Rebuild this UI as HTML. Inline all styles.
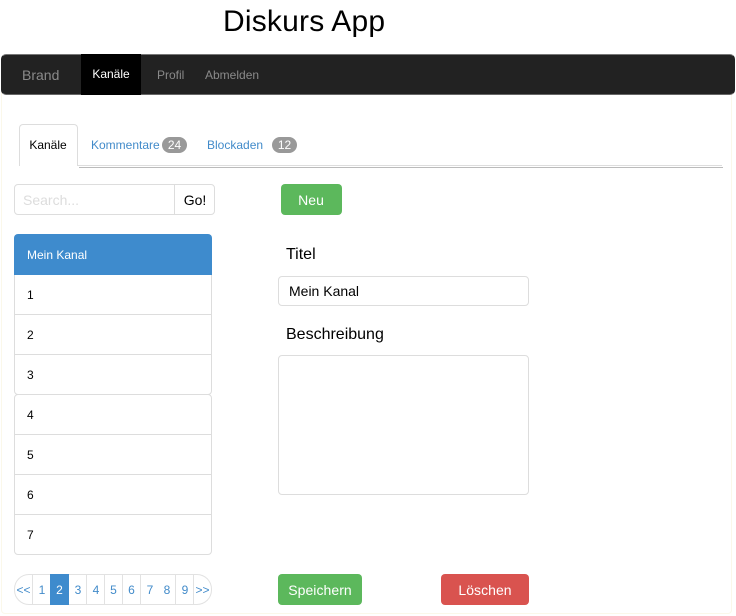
<!DOCTYPE html>
<html><head><meta charset="utf-8"><title>Diskurs App</title>
<style>
*{box-sizing:border-box}
html,body{margin:0;padding:0;width:736px;height:616px;overflow:hidden;background:#fff;font-family:"Liberation Sans",sans-serif;color:#000}
.a{position:absolute;white-space:nowrap}
.panel{left:1px;top:90px;width:731px;height:524px;border:1px solid #fbf8ea;border-radius:4px}
.nav{left:1px;top:54px;width:734px;height:41px;background:#222;border:1px solid #222;border-top-color:#777;border-bottom-color:#666;border-radius:5px}
.btn{display:block;text-align:center;color:#fff;font-size:14px;border-radius:4px;letter-spacing:.05px}
.item{left:14px;width:198px;height:41px;border:1px solid #ddd;background:#fff;font-size:12px;line-height:41px;padding-left:12px}
.pg{top:574px;height:31px;border:1px solid #e2e2e2;border-left:0;background:#fff;color:#428bca;font-size:12px;line-height:31px;text-align:center;padding-left:1px}
.badge{background:#999;color:#fff;border-radius:10px;font-size:12px;line-height:16px;height:16px;text-align:center}
.tab{color:#428bca;font-size:12px;line-height:16px}
.lbl{font-size:16px;line-height:20px}
</style></head>
<body>
<div class="a" style="left:223px;top:5px;font-size:30px;line-height:34px;letter-spacing:.2px">Diskurs App</div>
<div class="a panel"></div>
<div class="a nav"></div>
<div class="a" style="left:22px;top:67px;font-size:14px;line-height:16px;color:#8a8a8a">Brand</div>
<div class="a" style="left:81px;top:54px;width:60px;height:41px;background:#000;color:#fff;font-size:12px;line-height:41px;text-align:center">Kanäle</div>
<div class="a" style="left:157px;top:67px;font-size:12px;line-height:16px;color:#8a8a8a">Profil</div>
<div class="a" style="left:205px;top:67px;font-size:12px;line-height:16px;color:#8a8a8a">Abmelden</div>

<div class="a" style="left:78px;top:165px;width:644px;height:1px;background:#ddd"></div>
<div class="a" style="left:79px;top:167px;width:644px;height:1px;background:#bbb"></div>
<div class="a" style="left:19px;top:124px;width:59px;height:42px;background:#fff;border:1px solid #ddd;border-bottom:0;border-radius:4px 4px 0 0;font-size:12px;line-height:40px;text-align:center;padding-right:1px">Kanäle</div>
<div class="a tab" style="left:91px;top:137px">Kommentare</div>
<div class="a badge" style="left:162px;top:137px;width:25px">24</div>
<div class="a tab" style="left:207px;top:137px">Blockaden</div>
<div class="a badge" style="left:272px;top:137px;width:25px">12</div>

<div class="a" style="left:14px;top:184px;width:161px;height:31px;border:1px solid #ddd;border-radius:4px 0 0 4px;font-size:14px;line-height:31px;padding-left:8px;color:#ddd;background:#fff">Search...</div>
<div class="a" style="left:174px;top:184px;width:41px;height:31px;border:1px solid #ddd;border-radius:0 4px 4px 0;font-size:14px;line-height:31px;text-align:center;background:#fff;padding-left:1px">Go!</div>
<div class="a btn" style="left:281px;top:184px;width:61px;height:31px;line-height:33px;background:#5cb85c;padding-right:1px">Neu</div>

<div class="a item" style="top:354px;height:41px;border-radius:0 0 4px 4px">3</div>
<div class="a item" style="top:314px">2</div>
<div class="a item" style="top:274px">1</div>
<div class="a" style="left:14px;top:234px;width:198px;height:41px;background:#3e8bcd;border-radius:4px 4px 0 0;color:#fff;font-size:12px;line-height:43px;padding-left:13px">Mein Kanal</div>

<div class="a item" style="top:394px;border-radius:4px 4px 0 0">4</div>
<div class="a item" style="top:434px">5</div>
<div class="a item" style="top:474px">6</div>
<div class="a item" style="top:514px;border-radius:0 0 4px 4px">7</div>

<div class="a pg" style="left:14px;width:19px;border-left:1px solid #e2e2e2;border-radius:15px 0 0 15px;padding-left:0">&lt;&lt;</div>
<div class="a pg" style="left:33px;width:18px">1</div>
<div class="a pg" style="left:50px;width:19px;background:#3e8bcd;border-color:#3e8bcd;color:#fff">2</div>
<div class="a pg" style="left:69px;width:18px">3</div>
<div class="a pg" style="left:87px;width:18px">4</div>
<div class="a pg" style="left:105px;width:18px;padding-left:0">5</div>
<div class="a pg" style="left:123px;width:18px;padding-left:0">6</div>
<div class="a pg" style="left:141px;width:18px">7</div>
<div class="a pg" style="left:158px;width:18px">8</div>
<div class="a pg" style="left:176px;width:18px">9</div>
<div class="a pg" style="left:194px;width:18px;border-radius:0 15px 15px 0;padding-left:0">&gt;&gt;</div>

<div class="a lbl" style="left:286px;top:245px">Titel</div>
<div class="a" style="left:278px;top:276px;width:251px;height:30px;border:1px solid #ddd;border-radius:4px;font-size:14px;line-height:28px;padding-left:10px;background:#fff">Mein Kanal</div>
<div class="a lbl" style="left:286px;top:325px">Beschreibung</div>
<div class="a" style="left:278px;top:355px;width:251px;height:140px;border:1px solid #ddd;border-radius:4px;background:#fff"></div>

<div class="a btn" style="left:278px;top:574px;width:84px;height:31px;line-height:33px;background:#5cb85c">Speichern</div>
<div class="a btn" style="left:441px;top:574px;width:88px;height:31px;line-height:33px;background:#d9534f">Löschen</div>
</body></html>
